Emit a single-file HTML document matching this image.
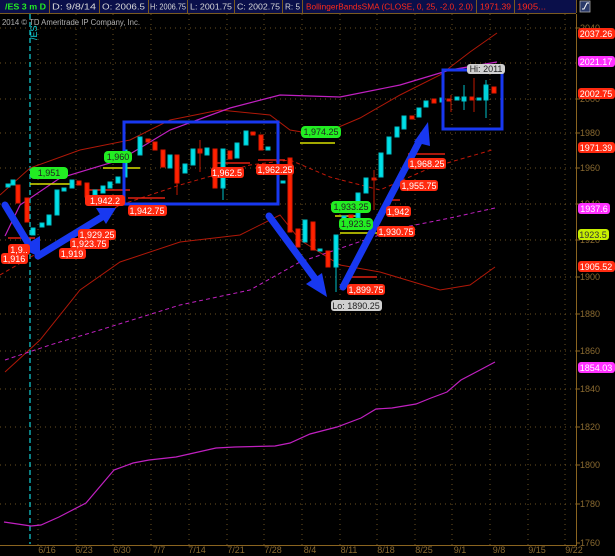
<!DOCTYPE html>
<html><head><meta charset="utf-8"><style>
html,body{margin:0;padding:0;background:#000;width:615px;height:556px;overflow:hidden}
svg{display:block;font-family:"Liberation Sans",sans-serif}
</style></head><body>
<svg width="615" height="556" viewBox="0 0 615 556" xmlns="http://www.w3.org/2000/svg">
<rect width="615" height="556" fill="#000"/>
<!-- header -->
<rect x="0" y="0" width="576" height="13" fill="#0a0f4a"/>
<g stroke="#7a5a20" stroke-width="1">
<line x1="0" y1="13.5" x2="576" y2="13.5"/>
<line x1="49.5" y1="0" x2="49.5" y2="13"/><line x1="99.5" y1="0" x2="99.5" y2="13"/><line x1="148.5" y1="0" x2="148.5" y2="13"/><line x1="187.5" y1="0" x2="187.5" y2="13"/><line x1="234.5" y1="0" x2="234.5" y2="13"/><line x1="282.5" y1="0" x2="282.5" y2="13"/><line x1="302.5" y1="0" x2="302.5" y2="13"/><line x1="476.5" y1="0" x2="476.5" y2="13"/><line x1="514.5" y1="0" x2="514.5" y2="13"/><line x1="576.5" y1="0" x2="576.5" y2="13"/>
</g>
<g font-size="8" fill="#d8d8d8">
<text x="5" y="9.5" fill="#22ee22" font-weight="bold" textLength="41" lengthAdjust="spacingAndGlyphs">/ES 3 m D</text>
<text x="52" y="9.5" textLength="44" lengthAdjust="spacingAndGlyphs">D: 9/8/14</text>
<text x="102" y="9.5" textLength="43" lengthAdjust="spacingAndGlyphs">O: 2006.5</text>
<text x="150" y="9.5" textLength="36" lengthAdjust="spacingAndGlyphs">H: 2006.75</text>
<text x="190" y="9.5" textLength="42" lengthAdjust="spacingAndGlyphs">L: 2001.75</text>
<text x="237" y="9.5" textLength="43" lengthAdjust="spacingAndGlyphs">C: 2002.75</text>
<text x="285" y="9.5" textLength="15" lengthAdjust="spacingAndGlyphs">R: 5</text>
<text x="306" y="9.5" fill="#ff2a1a" textLength="167" lengthAdjust="spacingAndGlyphs">BollingerBandsSMA (CLOSE, 0, 25, -2.0, 2.0)</text>
<text x="480" y="9.5" fill="#ff2a1a" textLength="31" lengthAdjust="spacingAndGlyphs">1971.39</text>
<text x="517" y="9.5" fill="#ff2a1a" textLength="29" lengthAdjust="spacingAndGlyphs">1905...</text>
</g>
<rect x="580" y="1" width="10" height="11" fill="#2a3a6a" stroke="#aaa" stroke-width="0.8"/>
<path d="M582 9 L584 9 L587 3 L589 3" stroke="#fff" fill="none" stroke-width="1"/>
<!-- axis -->
<line x1="576.5" y1="14" x2="576.5" y2="545" stroke="#8a6420"/>
<line x1="0" y1="545.5" x2="577" y2="545.5" stroke="#8a6420"/>
<!-- grid -->
<g stroke="#6a5020" stroke-width="1" stroke-dasharray="1,4">
<line x1="0" x2="576" y1="28" y2="28"/><line x1="0" x2="576" y1="63" y2="63"/><line x1="0" x2="576" y1="99" y2="99"/><line x1="0" x2="576" y1="133" y2="133"/><line x1="0" x2="576" y1="168" y2="168"/><line x1="0" x2="576" y1="204" y2="204"/><line x1="0" x2="576" y1="240" y2="240"/><line x1="0" x2="576" y1="277" y2="277"/><line x1="0" x2="576" y1="314" y2="314"/><line x1="0" x2="576" y1="351" y2="351"/><line x1="0" x2="576" y1="389" y2="389"/><line x1="0" x2="576" y1="427" y2="427"/><line x1="0" x2="576" y1="465" y2="465"/><line x1="0" x2="576" y1="504" y2="504"/>
<line y1="14" y2="545" x1="38" x2="38"/><line y1="14" y2="545" x1="76" x2="76"/><line y1="14" y2="545" x1="113" x2="113"/><line y1="14" y2="545" x1="151" x2="151"/><line y1="14" y2="545" x1="189" x2="189"/><line y1="14" y2="545" x1="227" x2="227"/><line y1="14" y2="545" x1="264" x2="264"/><line y1="14" y2="545" x1="302" x2="302"/><line y1="14" y2="545" x1="340" x2="340"/><line y1="14" y2="545" x1="377" x2="377"/><line y1="14" y2="545" x1="415" x2="415"/><line y1="14" y2="545" x1="452" x2="452"/><line y1="14" y2="545" x1="490" x2="490"/><line y1="14" y2="545" x1="528" x2="528"/><line y1="14" y2="545" x1="565" x2="565"/>
</g>
<g stroke="#8a6420"><line x1="576" x2="580" y1="28" y2="28"/><line x1="576" x2="580" y1="99" y2="99"/><line x1="576" x2="580" y1="133" y2="133"/><line x1="576" x2="580" y1="168" y2="168"/><line x1="576" x2="580" y1="204" y2="204"/><line x1="576" x2="580" y1="240" y2="240"/><line x1="576" x2="580" y1="277" y2="277"/><line x1="576" x2="580" y1="314" y2="314"/><line x1="576" x2="580" y1="351" y2="351"/><line x1="576" x2="580" y1="389" y2="389"/><line x1="576" x2="580" y1="427" y2="427"/><line x1="576" x2="580" y1="465" y2="465"/><line x1="576" x2="580" y1="504" y2="504"/><line x1="576" x2="580" y1="543" y2="543"/></g>
<g font-size="9" fill="#8a6a30">
<text x="580" y="31">2040</text><text x="580" y="102">2000</text><text x="580" y="136">1980</text><text x="580" y="171">1960</text><text x="580" y="207">1940</text><text x="580" y="243">1920</text><text x="580" y="280">1900</text><text x="580" y="317">1880</text><text x="580" y="354">1860</text><text x="580" y="392">1840</text><text x="580" y="430">1820</text><text x="580" y="468">1800</text><text x="580" y="507">1780</text><text x="580" y="546">1760</text>
<g text-anchor="middle"><text x="47" y="553">6/16</text><text x="84" y="553">6/23</text><text x="122" y="553">6/30</text><text x="159" y="553">7/7</text><text x="197" y="553">7/14</text><text x="236" y="553">7/21</text><text x="273" y="553">7/28</text><text x="310" y="553">8/4</text><text x="349" y="553">8/11</text><text x="386" y="553">8/18</text><text x="424" y="553">8/25</text><text x="460" y="553">9/1</text><text x="499" y="553">9/8</text><text x="537" y="553">9/15</text><text x="574" y="553">9/22</text></g>
</g>
<text x="2" y="25" font-size="8" fill="#b0b0b0" textLength="138" lengthAdjust="spacingAndGlyphs">2014 © TD Ameritrade IP Company, Inc.</text>
<line x1="30" y1="14" x2="30" y2="544" stroke="#10d0d8" stroke-width="1.2" stroke-dasharray="5,3"/>
<text transform="translate(37,40) rotate(-90)" font-size="9" fill="#10d0d8">/ES</text>
<!-- indicator lines -->
<g fill="none">
<path d="M0,195 L30,168 L80,150 L130,140 L170,120 L220,110 L270,115 L290,130 L320,135 L360,118 L400,95 L440,75 L470,52 L497,33" stroke="#b01808" stroke-width="1"/>
<path d="M5,236 L20,205 L60,178 L120,160 L170,130 L230,108 L280,95 L340,97 L400,85 L450,70 L497,62" stroke="#c020c0" stroke-width="1.2"/>
<path d="M0,275 L60,240 L120,205 L180,185 L250,165 L290,160 L330,177 L380,190 L430,168 L492,150" stroke="#c01808" stroke-width="1" stroke-dasharray="4,3"/>
<path d="M5,372 L40,340 L80,290 L120,262 L180,242 L240,235 L280,215 L300,240 L340,265 L380,272 L440,290 L470,285 L495,267" stroke="#b01808" stroke-width="1"/>
<path d="M5,360 L50,345 L100,330 L180,305 L250,290 L300,262 L350,245 L400,228 L450,218 L495,208" stroke="#c020c0" stroke-width="1" stroke-dasharray="4,3"/>
<path d="M4,522 L31,526 L41,525 L59,517 L86,503 L114,470 L133,463 L149,460 L176,457 L216,448 L235,447 L275,446 L290,443 L310,434 L337,427 L361,418 L376,409 L392,408 L416,404 L431,398 L447,392 L461,380 L480,370 L495,362" stroke="#c020c0" stroke-width="1.2"/>
</g>
<!-- horizontal level ticks -->
<g stroke-width="1.5">
<line x1="30" y1="184" x2="70" y2="184" stroke="#d8e000"/><line x1="103" y1="168" x2="140" y2="168" stroke="#d8e000"/><line x1="300" y1="143" x2="335" y2="143" stroke="#d8e000"/><line x1="335" y1="216" x2="360" y2="216" stroke="#d8e000"/><line x1="340" y1="233" x2="380" y2="233" stroke="#d8e000"/>
<line x1="8" y1="238" x2="35" y2="238" stroke="#e02010"/><line x1="88" y1="190" x2="130" y2="190" stroke="#e02010"/><line x1="128" y1="198" x2="165" y2="198" stroke="#e02010"/><line x1="215" y1="163" x2="250" y2="163" stroke="#e02010"/><line x1="258" y1="160" x2="285" y2="160" stroke="#e02010"/><line x1="408" y1="154" x2="445" y2="154" stroke="#e02010"/><line x1="385" y1="200" x2="400" y2="200" stroke="#e02010"/><line x1="350" y1="277" x2="377" y2="277" stroke="#e02010"/>
</g>
<!-- candles -->
<g stroke-width="1">
<g fill="#00e0e8" stroke="#00c0c8">
<rect x="6" y="184" width="4" height="3"/><rect x="11" y="180" width="4" height="5"/><rect x="31" y="228" width="4" height="7"/><rect x="40" y="223" width="4" height="4"/><rect x="47" y="215" width="4" height="10"/><rect x="55" y="190" width="4" height="25"/><rect x="62" y="188" width="4" height="3"/><rect x="70" y="180" width="4" height="8"/><rect x="93" y="190" width="4" height="5"/><rect x="101" y="186" width="4" height="7"/><rect x="108" y="182" width="4" height="6"/><rect x="116" y="177" width="4" height="6"/><rect x="123" y="150" width="4" height="27"/><rect x="138" y="137" width="4" height="18"/><rect x="168" y="155" width="4" height="13"/><rect x="183" y="164" width="4" height="9"/><rect x="191" y="149" width="4" height="16"/><rect x="205" y="148" width="4" height="7"/><rect x="221" y="149" width="4" height="39"/><rect x="235" y="143" width="4" height="15"/><rect x="244" y="131" width="4" height="14"/><rect x="266" y="147" width="4" height="3"/><rect x="281" y="181" width="4" height="2"/>
<rect x="303" y="220" width="4" height="22"/><rect x="318" y="249" width="4" height="2"/><rect x="334" y="235" width="4" height="32"/><rect x="342" y="216" width="4" height="6"/><rect x="356" y="193" width="4" height="25"/><rect x="364" y="178" width="4" height="15"/><rect x="379" y="153" width="4" height="24"/><rect x="387" y="137" width="4" height="17"/><rect x="395" y="127" width="4" height="10"/><rect x="402" y="116" width="4" height="13"/><rect x="417" y="108" width="4" height="9"/><rect x="424" y="101" width="4" height="6"/><rect x="440" y="98" width="4" height="4"/><rect x="455" y="97" width="4" height="3"/><rect x="462" y="97" width="4" height="4"/><rect x="477" y="98" width="4" height="2"/><rect x="484" y="85" width="4" height="15"/>
</g>
<g fill="#ff2200" stroke="#e01800">
<rect x="16" y="185" width="4" height="18"/><rect x="25" y="198" width="4" height="24"/><rect x="77" y="181" width="4" height="4"/><rect x="85" y="183" width="4" height="14"/><rect x="146" y="139" width="4" height="3"/><rect x="153" y="142" width="4" height="8"/><rect x="161" y="150" width="4" height="17"/><rect x="175" y="155" width="4" height="28"/><rect x="198" y="149" width="4" height="4"/><rect x="213" y="149" width="4" height="39"/><rect x="228" y="151" width="4" height="8"/><rect x="251" y="132" width="4" height="3"/><rect x="259" y="135" width="4" height="15"/><rect x="288" y="158" width="4" height="74"/><rect x="296" y="229" width="4" height="18"/><rect x="311" y="222" width="4" height="28"/><rect x="326" y="251" width="4" height="16"/><rect x="349" y="215" width="4" height="6"/><rect x="372" y="178" width="4" height="2"/><rect x="410" y="116" width="4" height="3"/><rect x="432" y="99" width="4" height="4"/><rect x="447" y="99" width="4" height="2"/><rect x="470" y="97" width="4" height="3"/><rect x="492" y="87" width="4" height="6"/>
</g>
<g stroke="#00c0c8"><line x1="336" y1="267" x2="336" y2="292"/><line x1="223" y1="188" x2="223" y2="200"/><line x1="125" y1="140" x2="125" y2="205"/><line x1="486" y1="80" x2="486" y2="118"/><line x1="464" y1="85" x2="464" y2="110"/></g>
<g stroke="#c01800"><line x1="177" y1="183" x2="177" y2="195"/><line x1="200" y1="140" x2="200" y2="172"/><line x1="474" y1="78" x2="474" y2="112"/><line x1="451" y1="95" x2="451" y2="112"/><line x1="374" y1="170" x2="374" y2="210"/></g>
</g>
<!-- blue arrows & boxes -->
<g stroke="#1838f0" fill="none">
<rect x="124" y="122" width="154" height="82" stroke-width="3"/>
<rect x="443" y="70" width="59" height="59" stroke-width="3"/>
<g stroke-width="7" stroke-linecap="round">
<line x1="5" y1="205" x2="28" y2="243"/><line x1="38" y1="256" x2="102" y2="217"/><line x1="269" y1="216" x2="316" y2="280"/><line x1="343" y1="287" x2="420" y2="140"/>
</g>
</g>
<g fill="#1838f0">
<polygon points="20,248 40,257 40,236"/><polygon points="116,208 96,208 106,224"/><polygon points="327,297 306,284 322,273"/><polygon points="428,122 414,142 430,146"/>
</g>
<!-- labels -->
<g font-size="9" text-anchor="middle">
<g fill="#ff2a10"><rect x="1" y="253" width="27" height="11" rx="3"/><rect x="8" y="244" width="22" height="11" rx="3"/><rect x="59" y="248" width="27" height="11" rx="3"/><rect x="70" y="238" width="39" height="11" rx="3"/><rect x="78" y="229" width="38" height="11" rx="3"/><rect x="85" y="195" width="40" height="11" rx="3"/><rect x="128" y="205" width="39" height="11" rx="3"/><rect x="211" y="167" width="33" height="11" rx="3"/><rect x="256" y="164" width="38" height="11" rx="3"/><rect x="408" y="158" width="38" height="11" rx="3"/><rect x="400" y="180" width="38" height="11" rx="3"/><rect x="386" y="206" width="25" height="11" rx="3"/><rect x="377" y="226" width="38" height="11" rx="3"/><rect x="347" y="284" width="38" height="11" rx="3"/>
<rect x="578" y="28" width="37" height="11" rx="3"/><rect x="578" y="88" width="37" height="11" rx="3"/><rect x="578" y="142" width="37" height="11" rx="3"/><rect x="578" y="261" width="37" height="11" rx="3"/></g>
<g fill="#ff30ff"><rect x="578" y="56" width="37" height="11" rx="3"/><rect x="578" y="203" width="32" height="11" rx="3"/><rect x="578" y="362" width="37" height="11" rx="3"/></g>
<rect x="578" y="229" width="31" height="11" rx="3" fill="#c8f000"/>
<g fill="#22ee22"><rect x="30" y="167" width="38" height="12" rx="4"/><rect x="104" y="151" width="28" height="12" rx="4"/><rect x="301" y="126" width="40" height="12" rx="4"/><rect x="331" y="201" width="40" height="12" rx="4"/><rect x="339" y="218" width="34" height="12" rx="4"/></g>
<g fill="#d0d0d0"><rect x="331" y="300" width="51" height="11" rx="3"/><rect x="467" y="64" width="38" height="10" rx="3"/></g>
<g fill="#fff"><text x="14" y="262">1,916</text><text x="19" y="253">1,9..</text><text x="72" y="257">1,919</text><text x="89" y="247">1,923.75</text><text x="97" y="238">1,929.25</text><text x="105" y="204">1,942.2</text><text x="147" y="214">1,942.75</text><text x="227" y="176">1,962.5</text><text x="275" y="173">1,962.25</text><text x="427" y="167">1,968.25</text><text x="419" y="189">1,955.75</text><text x="398" y="215">1,942</text><text x="396" y="235">1,930.75</text><text x="366" y="293">1,899.75</text>
<text x="596" y="37">2037.26</text><text x="596" y="65">2021.17</text><text x="596" y="97">2002.75</text><text x="596" y="151">1971.39</text><text x="594" y="212">1937.6</text><text x="596" y="270">1905.52</text><text x="596" y="371">1854.03</text></g>
<text x="593" y="238" fill="#333">1923.5</text>
<g fill="#222"><text x="49" y="176">1,951</text><text x="118" y="160">1,960</text><text x="321" y="135">1,974.25</text><text x="351" y="210">1,933.25</text><text x="356" y="227">1,923.5</text><text x="356" y="309">Lo: 1890.25</text><text x="486" y="72">Hi: 2011</text></g>
</g>
</svg>
</body></html>
